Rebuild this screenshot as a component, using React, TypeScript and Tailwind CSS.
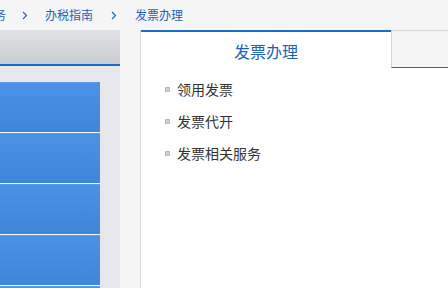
import React from "react";

const Chevron = () => (
  <svg width="6" height="9" viewBox="0 0 6 9" className="shrink-0">
    <path d="M1 1 L4.5 4.5 L1 8" fill="none" stroke="#1d62b8" strokeWidth="1.1" />
  </svg>
);

export default function App() {
  const items = ["领用发票", "发票代开", "发票相关服务"];
  return (
    <div
      className="w-[448px] h-[288px] overflow-hidden bg-[#f5f5f5] flex flex-col"
      style={{ fontFamily: '"Noto Sans CJK SC", "Noto Sans", sans-serif' }}
    >
      <div className="h-[30px] shrink-0 flex items-center text-[12px] text-[#1d62b8] leading-none">
        <span className="ml-[-42px]">纳税服务</span>
        <span className="ml-[16px] mr-[17px]"><Chevron /></span>
        <span>办税指南</span>
        <span className="ml-[18px] mr-[18px]"><Chevron /></span>
        <span>发票办理</span>
      </div>
      <div className="flex flex-1 min-h-0">
        <div className="w-[120px] shrink-0 flex flex-col min-h-0">
          <div className="h-[34px] shrink-0 bg-gradient-to-b from-[#e1e2e5] to-[#cbccd0]" />
          <div className="h-[2px] shrink-0 bg-[#1d6ac5]" />
          <div className="flex-1 min-h-0 overflow-hidden bg-[#e6e7eb] pt-[16px] pr-[20px] flex flex-col gap-[1px]">
            {[0, 1, 2, 3, 4].map((i) => (
              <div
                key={i}
                className="h-[50px] shrink-0 bg-gradient-to-b from-[#4b92e6] to-[#3f85da] border-t border-[#5a9bea] shadow-[0_1px_0_#f4f7fc] flex items-center justify-end pr-[11px]"
              >
                <span className="text-[#3f83d6] text-[10px] leading-none">⋮</span>
              </div>
            ))}
          </div>
        </div>
        <div className="w-[20px] shrink-0" />
        <div className="flex-1 bg-white border-l border-[#d6d6d6] flex flex-col">
          <div className="flex h-[38px] shrink-0">
            <div className="w-[250px] shrink-0 border-t-2 border-[#1d6ac5] flex items-center justify-center text-[16px] text-[#1d62b8] leading-none">
              <span className="mt-[2px]">发票办理</span>
            </div>
            <div className="flex-1 bg-[#f5f5f5] border-t border-l border-[#d6d6d6] border-b border-b-[#1d6ac5]" />
          </div>
          <div className="pl-[24px] pt-[12px] flex flex-col gap-[14px]">
            {items.map((t) => (
              <div key={t} className="flex items-center h-[18px] text-[14px] text-[#333] leading-none">
                <span className="w-[5px] h-[5px] bg-[#cfcfcf] border border-[#bdbdbd] mr-[7px]" />
                <span>{t}</span>
              </div>
            ))}
          </div>
        </div>
      </div>
    </div>
  );
}
